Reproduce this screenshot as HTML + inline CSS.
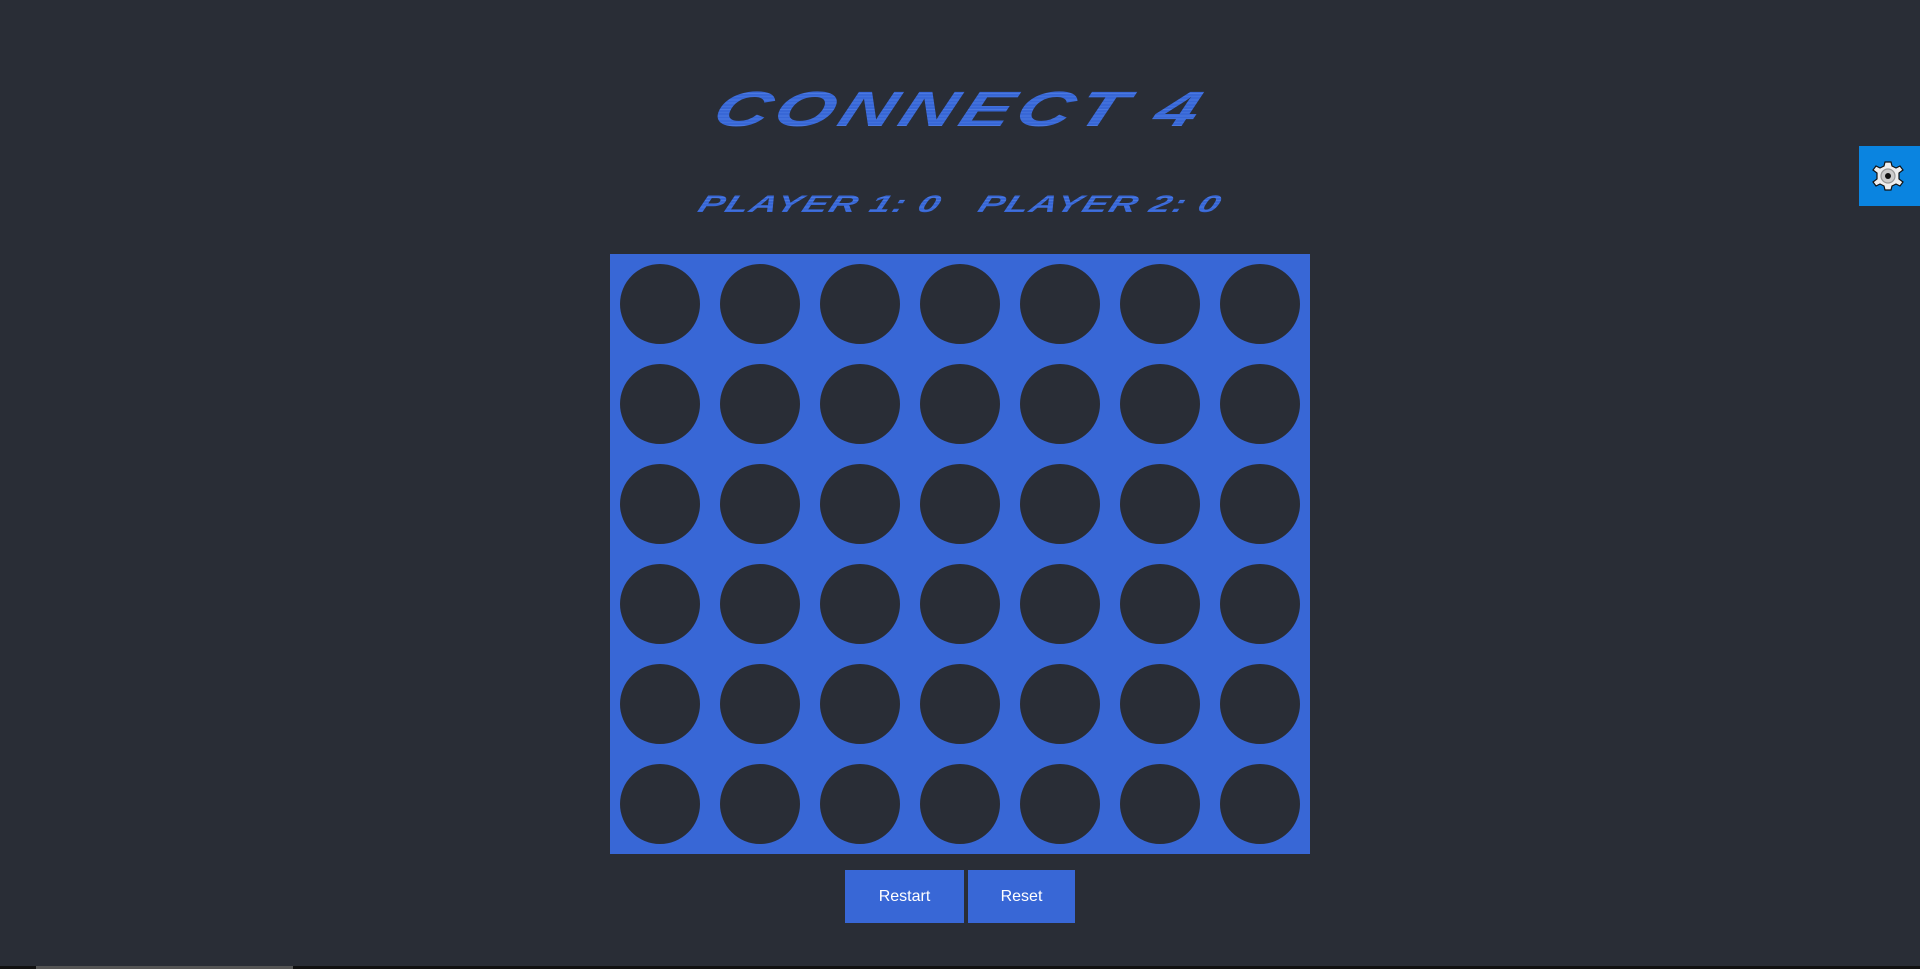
<!DOCTYPE html>
<html><head><style>
body{margin:0;width:1920px;height:969px;background:#292d36;overflow:hidden;position:relative;font-family:"Liberation Sans",sans-serif}
.t{position:absolute;left:0;width:1920px;text-align:center;font-weight:900;font-style:italic;color:#3867d6;
background:repeating-linear-gradient(180deg,#3867d6 0 3px,#4a78e0 3px 4px);-webkit-background-clip:text;background-clip:text;-webkit-text-fill-color:transparent}
#title{top:74px;font-size:62px;letter-spacing:4px;transform:skewX(-20deg) scale(1.24,0.8)}
#score{top:188px;font-size:30px;letter-spacing:1px;transform:skewX(-20deg) scale(1.27,0.8)}
#board{position:absolute;left:610px;top:254px;width:700px;height:600px;background:#3867d6}
.c{position:absolute;width:80px;height:80px;border-radius:50%;background:#292d36}
.b{position:absolute;top:870px;height:53px;background:#3867d6;color:#fff;font-size:16px;line-height:53px;text-align:center}
#gear{position:absolute;left:1859px;top:146px;width:61px;height:60px;background:#0a84e0}
#bar{position:absolute;left:0;top:966px;width:1920px;height:3px;background:#111}
</style></head><body>
<div class="t" id="title">CONNECT 4</div>
<div class="t" id="score">PLAYER 1: 0<span style="display:inline-block;width:30px"></span>PLAYER 2: 0</div>
<div id="board">
<script>
for(let r=0;r<6;r++)for(let c=0;c<7;c++)document.write('<div class="c" style="left:'+(10+c*100)+'px;top:'+(10+r*100)+'px"></div>');
</script>
</div>
<div class="b" style="left:845px;width:119px">Restart</div>
<div class="b" style="left:968px;width:107px">Reset</div>
<div id="gear"><svg width="61" height="60" viewBox="0 0 61 60">
<g transform="translate(29,30)" fill="#eee" stroke="#111" stroke-width="1.2">
<path d="M-3,-14 L3,-14 L4,-10 L8,-8 L12,-10 L15,-6 L11,-3 L11,3 L15,6 L12,10 L8,8 L4,10 L3,14 L-3,14 L-4,10 L-8,8 L-12,10 L-15,6 L-11,3 L-11,-3 L-15,-6 L-12,-10 L-8,-8 L-4,-10 Z"/>
<circle r="7" fill="#ccc" stroke="#999"/><circle r="3" fill="#111" stroke="none"/></g></svg></div>
<div id="bar"><div style="position:absolute;left:36px;top:0;width:257px;height:3px;background:#555"></div></div>
</body></html>
